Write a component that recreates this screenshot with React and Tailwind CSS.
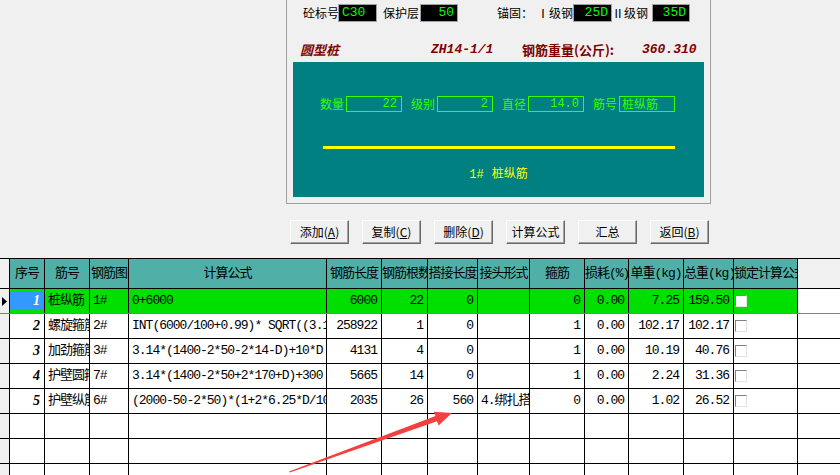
import React from "react";

const rows = [
  ["1", "桩纵筋", "1#", "0+6000", "6000", "22", "0", "", "0", "0.00", "7.25", "159.50"],
  ["2", "螺旋箍筋", "2#", "INT(6000/100+0.99)* SQRT((3.14*(1400-2*50)", "258922", "1", "0", "", "1", "0.00", "102.17", "102.17"],
  ["3", "加劲箍筋", "3#", "3.14*(1400-2*50-2*14-D)+10*D", "4131", "4", "0", "", "1", "0.00", "10.19", "40.76"],
  ["4", "护壁圆箍", "7#", "3.14*(1400-2*50+2*170+D)+300", "5665", "14", "0", "", "1", "0.00", "2.24", "31.36"],
  ["5", "护壁纵筋", "6#", "(2000-50-2*50)*(1+2*6.25*D/1000)", "2035", "26", "560", "4.绑扎搭接", "0", "0.00", "1.02", "26.52"],
  null,
  null,
  null,
];

// column widths include the right grid line
const cols = [
  { w: "w-[35px]", a: "no", h: "序号" },
  { w: "w-[45px]", a: "l", h: "筋号" },
  { w: "w-[39px]", a: "l", h: "钢筋图" },
  { w: "w-[198px]", a: "l", h: "计算公式" },
  { w: "w-[55px]", a: "r", h: "钢筋长度" },
  { w: "w-[46px]", a: "r", h: "钢筋根数" },
  { w: "w-[50px]", a: "r", h: "搭接长度" },
  { w: "w-[52px]", a: "l", h: "接头形式" },
  { w: "w-[55px]", a: "r", h: "箍筋" },
  { w: "w-[44px]", a: "r", h: "损耗(%)" },
  { w: "w-[55px]", a: "r", h: "单重(kg)" },
  { w: "w-[50px]", a: "r", h: "总重(kg)" },
  { w: "w-[64px]", a: "cb", h: "锁定计算公式" },
];

const LcdBox = ({ w, left, children }) => (
  <div
    className={`${w} h-[18px] bg-black border border-[#a0a0a0] text-[#00ff00] text-[13px] leading-[16px] font-['Liberation_Mono',monospace] ${
      left ? "text-left pl-[3px]" : "text-right pr-[3px]"
    }`}
  >
    {children}
  </div>
);

const GreenField = ({ label, value, left, ml }) => (
  <div className={`flex items-center ${ml}`}>
    <span className="w-[26px] text-[12px] leading-none">{label}</span>
    <div
      className={`w-[56px] h-[16px] border border-[#33ff00] text-[12px] leading-[14px] whitespace-nowrap overflow-hidden ${
        left ? "text-left pl-[2px]" : "text-right pr-[4px] font-['Liberation_Mono',monospace]"
      }`}
    >
      {value}
    </div>
  </div>
);

const Btn = ({ text, k }) => (
  <div className="w-[59px] h-[24px] bg-[#f0f0f0] border border-t-white border-l-white border-r-[#696969] border-b-[#696969] shadow-[inset_-1px_-1px_0_#a0a0a0] flex items-center justify-center text-[12px] text-black">
    {text}
    {k && (
      <span>
        (<span className="underline">{k}</span>)
      </span>
    )}
  </div>
);

const CheckBox = () => (
  <div className="w-[12px] h-[12px] bg-white border border-t-[#808080] border-l-[#808080] border-r-[#e3e3e3] border-b-[#e3e3e3]" />
);

const App = () => {
  return (
    <div className="relative w-[840px] h-[475px] overflow-hidden bg-[#f0f0f0] font-['Noto_Sans_CJK_SC',sans-serif] text-black">
      {/* top form */}
      <div className="ml-[286px] w-[425px] h-[204px] border-x border-b border-[#a0a0a0] px-[6px] flex flex-col">
        <div className="mt-[4px] h-[18px] flex items-center text-[12px] whitespace-nowrap">
          <span className="ml-[10px] w-[35px]">砼标号</span>
          <LcdBox w="w-[39px]" left>C30</LcdBox>
          <span className="ml-[6px] w-[37px]">保护层</span>
          <LcdBox w="w-[38px]">50</LcdBox>
          <span className="ml-[39px] w-[40px]">锚固：</span>
          <span className="w-[36px]">Ⅰ级钢</span>
          <LcdBox w="w-[39px]">25D</LcdBox>
          <span className="w-[40px]">Ⅱ级钢</span>
          <LcdBox w="w-[38px]">35D</LcdBox>
        </div>
        <div className="mt-[20px] h-[15px] flex items-center text-[#800000] font-bold text-[13px] whitespace-nowrap">
          <span className="ml-[7px] w-[131px] italic">圆型桩</span>
          <span className="w-[91px] italic font-['Liberation_Mono',monospace]">ZH14-1/1</span>
          <span className="w-[120px]">钢筋重量(公斤):</span>
          <span className="italic font-['Liberation_Mono',monospace]">360.310</span>
        </div>
        <div className="mt-[5px] h-[135px] bg-[#008080] flex flex-col text-[#33ff00]">
          <div className="mt-[34px] h-[16px] pl-[27px] flex items-center">
            <GreenField label="数量" value="22" />
            <GreenField label="级别" value="2" ml="ml-[9px]" />
            <GreenField label="直径" value="14.0" ml="ml-[9px]" />
            <GreenField label="筋号" value="桩纵筋" left ml="ml-[9px]" />
          </div>
          <div className="mt-[34px] ml-[30px] w-[352px] h-[3px] bg-[#ffff00]" />
          <div className="mt-[17px] text-center text-[#ffff00] text-[12px] leading-[14px] whitespace-pre">
            <span className="font-['Liberation_Mono',monospace]">1#</span>   桩纵筋
          </div>
        </div>
      </div>

      {/* buttons */}
      <div className="ml-[290px] mt-[16px] flex gap-[13px]">
        <Btn text="添加" k="A" />
        <Btn text="复制" k="C" />
        <Btn text="删除" k="D" />
        <Btn text="计算公式" />
        <Btn text="汇总" />
        <Btn text="返回" k="B" />
      </div>

      {/* grid */}
      <div className="mt-[14px] font-['Liberation_Mono','Noto_Sans_CJK_SC',monospace] text-[13px] tracking-[-1px]">
        <div className="flex h-[31px] border-y border-black">
          <div className="w-[10px] shrink-0 border-r border-black bg-[#f0f0f0]" />
          {cols.map((c, i) => (
            <div
              key={i}
              className={`${c.w} shrink-0 border-r border-black bg-[#50b0a8] text-center whitespace-nowrap overflow-hidden leading-[29px]`}
            >
              {c.h}
            </div>
          ))}
          <div className="flex-1 bg-[#f0f0f0]" />
        </div>
        {rows.map((r, ri) => {
          const sel = ri === 0;
          return (
            <div
              key={ri}
              className={`flex h-[25px] border-b ${sel ? "border-[#3a8ee6] bg-[#00e000]" : "border-black bg-white"}`}
            >
              <div className="w-[10px] shrink-0 border-r border-black bg-[#f0f0f0] flex items-center">
                {sel && (
                  <svg width="7" height="9" viewBox="0 0 7 9" className="ml-[1px]">
                    <path d="M1 0 L6 4.5 L1 9 Z" fill="#000" />
                  </svg>
                )}
              </div>
              {cols.map((c, ci) => {
                const v = r ? r[ci] : "";
                if (c.a === "no") {
                  return (
                    <div key={ci} className={`${c.w} shrink-0 border-r border-black flex flex-col pt-[3px] pb-[4px]`}>
                      <div
                        className={`flex-1 text-right pr-[4px] font-['Liberation_Serif',serif] italic font-bold text-[14px] tracking-normal leading-[17px] ${
                          sel ? "bg-[#3399ff] text-white" : ""
                        }`}
                      >
                        {v}
                      </div>
                    </div>
                  );
                }
                if (c.a === "cb") {
                  return (
                    <div key={ci} className={`${c.w} shrink-0 border-r border-black flex items-center pl-[1px]`}>
                      {r && <CheckBox />}
                    </div>
                  );
                }
                return (
                  <div
                    key={ci}
                    className={`${c.w} shrink-0 border-r border-black overflow-hidden whitespace-nowrap leading-[24px] ${
                      c.a === "r" ? "text-right pr-[4px]" : "text-left pl-[3px]"
                    }`}
                  >
                    {v}
                  </div>
                );
              })}
              <div className="flex-1 bg-white" />
            </div>
          );
        })}
      </div>

      {/* annotation arrow */}
      <svg className="absolute left-0 top-0 pointer-events-none" width="840" height="475">
        <polygon
          points="289,471.6 435.5,415.9 433.7,411.8 452,413 438.6,425.5 437,421.2 289.8,472.4"
          fill="#f44040"
        />
      </svg>
    </div>
  );
};

export default App;
